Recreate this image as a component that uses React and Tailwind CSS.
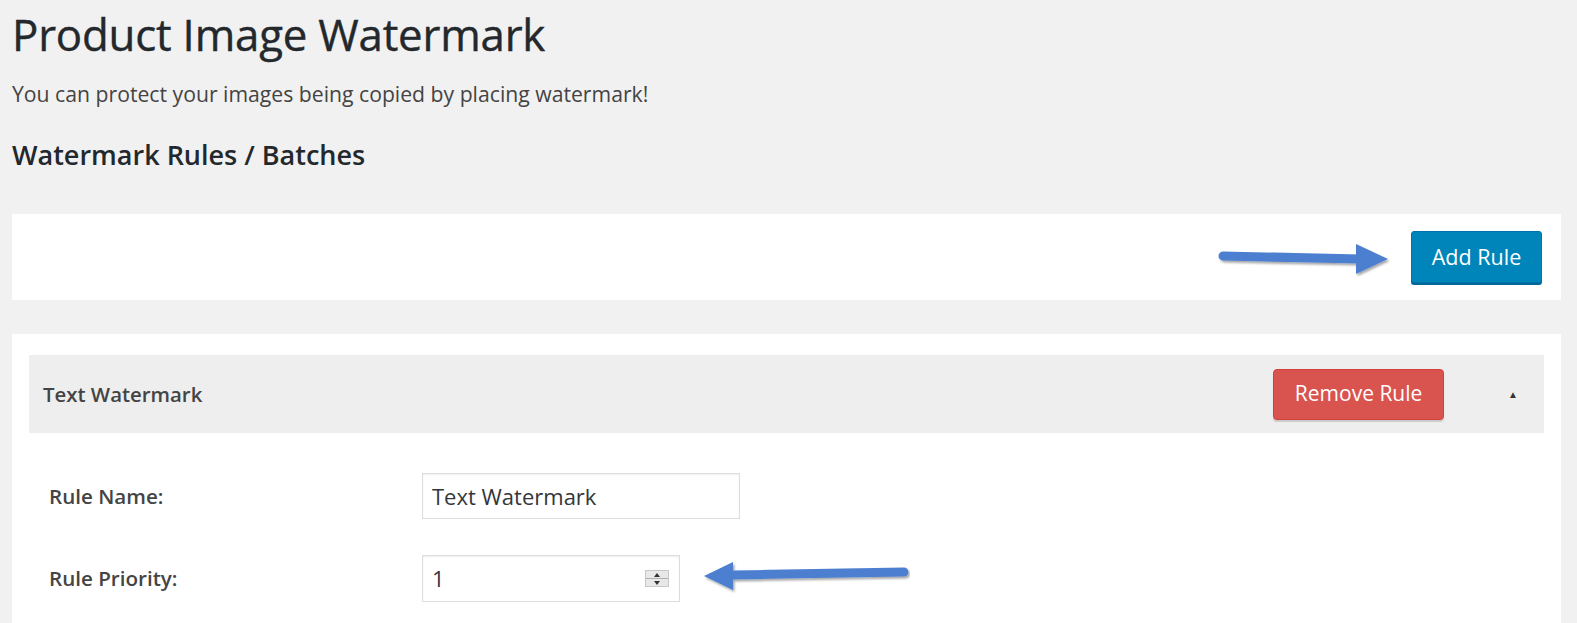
import React from 'react';

function Arrow({ className, w, h, shaft, head }) {
  return (
    <svg className={className} width={w} height={h} viewBox={`0 0 ${w} ${h}`} fill="none">
      <defs>
        <filter id="sh" x="-10%" y="-30%" width="120%" height="180%">
          <feDropShadow dx="1.5" dy="2" stdDeviation="1.2" floodColor="#000" floodOpacity="0.35" />
        </filter>
      </defs>
      <g filter="url(#sh)">
        <path d={shaft} stroke="#4e7fd0" strokeWidth="9" strokeLinecap="round" />
        <polygon points={head} fill="#4e7fd0" />
      </g>
    </svg>
  );
}

export default function App() {
  return (
    <div className="relative min-h-screen bg-[#f1f1f1] font-['Open_Sans',sans-serif] text-[#444] overflow-hidden">
      <div className="pl-3 pr-4 pt-[6px]">
        <h1 className="text-[43.8px] leading-[56px] font-medium text-[#23282d] tracking-[-0.2px] [-webkit-text-stroke:0.4px_#23282d]">
          Product Image Watermark
        </h1>
        <p className="mt-[18px] text-[21.2px] leading-[28px] text-[#444]">
          You can protect your images being copied by placing watermark!
        </p>
        <h2 className="mt-[30px] text-[27px] leading-[34px] font-semibold text-[#23282d]">Watermark Rules / Batches</h2>

        <div className="mt-[42px] bg-white px-[19px] py-[17px] flex justify-end">
          <button className="h-[52px] w-[131px] rounded-[3px] bg-[#0085ba] border border-[#0073aa] shadow-[0_2px_0_#006799] text-white text-[21.5px]">
            Add Rule
          </button>
        </div>

        <div className="mt-[34px] bg-white px-[17px] pt-[21px] pb-10">
          <div className="h-[78px] bg-[#eeeeee] flex items-center pl-[14px] pr-[26px]">
            <span className="text-[20.4px] font-semibold text-[#444]">Text Watermark</span>
            <button className="ml-auto h-[51px] w-[171px] rounded-[4px] bg-[#d9534f] border border-[#d43f3a] shadow-[0_2px_1px_rgba(0,0,0,0.15)] text-white text-[21px]">
              Remove Rule
            </button>
            <span className="ml-[64px] text-[10px] text-[#333]">▲</span>
          </div>

          <div className="pl-5 pt-[40px] flex flex-col gap-[36px]">
            <div className="flex items-center">
              <label className="w-[373px] text-[20.6px] font-semibold text-[#444]">Rule Name:</label>
              <input
                readOnly
                value="Text Watermark"
                className="h-[46px] w-[318px] border border-[#dddddd] shadow-[inset_0_1px_2px_rgba(0,0,0,0.07)] px-[9px] text-[22px] text-[#32373c] bg-white outline-none"
              />
            </div>
            <div className="flex items-center">
              <label className="w-[373px] text-[20.6px] font-semibold text-[#444]">Rule Priority:</label>
              <div className="h-[47px] w-[258px] border border-[#dddddd] shadow-[inset_0_1px_2px_rgba(0,0,0,0.07)] bg-white flex items-center pl-[9px] pr-[10px]">
                <input readOnly value="1" className="flex-1 min-w-0 text-[22px] text-[#32373c] outline-none bg-transparent" />
                <div className="w-[24px] h-[17px] flex flex-col bg-[#e8e8e8] border border-[#c8c8c8]">
                  <div className="flex-1 flex items-center justify-center border-b border-[#b0b0b0]">
                    <svg width="6" height="4" viewBox="0 0 6 4"><polygon points="3,0 6,4 0,4" fill="#333" /></svg>
                  </div>
                  <div className="flex-1 flex items-center justify-center">
                    <svg width="6" height="4" viewBox="0 0 6 4"><polygon points="0,0 6,0 3,4" fill="#333" /></svg>
                  </div>
                </div>
              </div>
            </div>
          </div>
        </div>
      </div>

      <Arrow
        className="absolute left-[1210px] top-[240px]"
        w={185}
        h={40}
        shaft="M13 16 L150 19"
        head="146,4 178,19 146,34"
      />
      <Arrow
        className="absolute left-[695px] top-[556px]"
        w={215}
        h={40}
        shaft="M209 16 L38 19"
        head="9,20 38,6 38,34"
      />
    </div>
  );
}
